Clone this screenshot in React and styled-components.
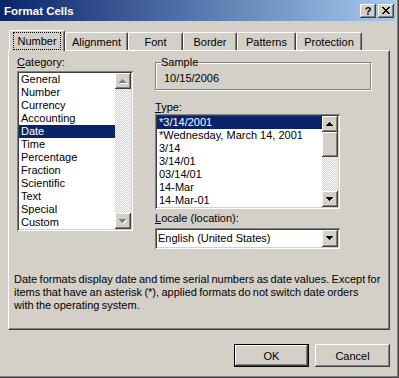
import React from 'react';
import styled, { createGlobalStyle, css } from 'styled-components';

const FACE = '#d4d0c8';
const SHADOW = '#808080';
const DARK = '#404040';
const SELECT = '#0a246a';

const GlobalStyle = createGlobalStyle`
  html, body {
    margin: 0;
    padding: 0;
    background: ${FACE};
  }
  body {
    font-family: "Liberation Sans", Arial, sans-serif;
    font-size: 11px;
    color: #000;
  }
`;

const raised = css`
  box-shadow: inset -1px -1px 0 ${DARK}, inset 1px 1px 0 #fff, inset -2px -2px 0 ${SHADOW}, inset 2px 2px 0 ${FACE};
`;

const sunken = css`
  box-shadow: inset 1px 1px 0 ${SHADOW}, inset -1px -1px 0 #fff, inset 2px 2px 0 ${DARK}, inset -2px -2px 0 ${FACE};
`;

const Window = styled.div`
  box-sizing: border-box;
  width: 399px;
  height: 378px;
  background: ${FACE};
  padding: 0 3px 3px 0;
  box-shadow: inset -1px -1px 0 ${DARK}, inset -2px -2px 0 ${SHADOW};
  display: flex;
  flex-direction: column;
`;

const TitleBar = styled.div`
  flex: none;
  height: 21px;
  display: flex;
  align-items: center;
  gap: 2px;
  padding: 0 2px 0 4px;
  background: linear-gradient(to right, #0a246a, #a6caf0);
`;

const Title = styled.div`
  flex: 1;
  color: #fff;
  font-weight: bold;
  font-size: 11.5px;
`;

const CaptionButton = styled.div`
  box-sizing: border-box;
  width: 16px;
  height: 14px;
  background: ${FACE};
  ${raised};
  display: flex;
  align-items: center;
  justify-content: center;
  font-weight: bold;
  font-size: 11px;
  line-height: 12px;
`;

const Body = styled.div`
  flex: 1;
  display: flex;
  flex-direction: column;
  padding: 9px 6px 0 8px;
`;

const TabStrip = styled.div`
  display: flex;
  align-items: flex-end;
  height: 21px;
  padding-left: 1px;
  margin-bottom: -1px;
  position: relative;
  z-index: 1;
`;

const Tab = styled.div`
  box-sizing: border-box;
  width: ${p => p.$w}px;
  height: ${p => (p.$active ? 21 : 18)}px;
  margin-bottom: ${p => (p.$active ? 0 : 1)}px;
  padding-top: ${p => (p.$active ? 2 : 3)}px;
  background: ${FACE};
  border-top: 1px solid #fff;
  border-left: 1px solid #fff;
  border-right: 1px solid ${DARK};
  box-shadow: inset -1px 0 0 ${SHADOW};
  border-radius: 2px 2px 0 0;
  display: flex;
  justify-content: center;
  align-items: flex-start;
  line-height: 13px;
`;

const TabLabel = styled.span`
  padding: ${p => (p.$focus ? '2px 3px 1px' : '0')};
  outline: ${p => (p.$focus ? `1px dotted #000` : 'none')};
`;

const Panel = styled.div`
  box-sizing: border-box;
  height: 280px;
  border-top: 1px solid #fff;
  border-left: 1px solid #fff;
  border-right: 1px solid ${DARK};
  border-bottom: 1px solid ${DARK};
  box-shadow: inset -1px -1px 0 ${SHADOW};
  padding: 5px 0 0 5px;
  display: flex;
  flex-direction: column;
`;

const Columns = styled.div`
  display: grid;
  grid-template-columns: 116px 216px;
  column-gap: 22px;
  align-items: start;
  padding-left: 3px;
`;

const Column = styled.div`
  display: flex;
  flex-direction: column;
`;

const Label = styled.div`
  line-height: 13px;
  margin-top: ${p => p.$mt || 0}px;
  margin-bottom: ${p => p.$mb || 0}px;
`;

const GroupBox = styled.div`
  position: relative;
  box-sizing: border-box;
  height: 28px;
  margin-top: 6px;
  border: 1px solid ${SHADOW};
  box-shadow: 1px 1px 0 #fff, inset 1px 1px 0 #fff;
  padding: 9px 0 0 8px;
  line-height: 13px;
`;

const GroupTitle = styled.span`
  position: absolute;
  top: -7px;
  left: 5px;
  padding: 0 1px 0 0;
  background: ${FACE};
  line-height: 13px;
`;

const ListBox = styled.div`
  box-sizing: border-box;
  width: ${p => p.$w}px;
  height: ${p => p.$h}px;
  background: #fff;
  padding: 2px;
  ${sunken};
  display: flex;
`;

const Items = styled.div`
  flex: 1;
  overflow: hidden;
`;

const Item = styled.div`
  height: 13px;
  line-height: 13px;
  padding-left: 2px;
  white-space: nowrap;
  background: ${p => (p.$selected ? SELECT : 'transparent')};
  color: ${p => (p.$selected ? '#fff' : '#000')};
`;

const ScrollBar = styled.div`
  width: 16px;
  display: flex;
  flex-direction: column;
  background-color: #fff;
  background-image: conic-gradient(${FACE} 25%, #fff 0 50%, ${FACE} 0 75%, #fff 0);
  background-size: 2px 2px;
`;

const ScrollButton = styled.div`
  box-sizing: border-box;
  flex: none;
  width: 16px;
  height: ${p => p.$h || 16}px;
  background: ${FACE};
  ${raised};
  display: flex;
  align-items: center;
  justify-content: center;
`;

const Track = styled.div`
  flex: 1;
`;

const Combo = styled.div`
  box-sizing: border-box;
  width: 185px;
  height: 21px;
  margin-top: 3px;
  background: #fff;
  padding: 2px;
  ${sunken};
  display: flex;
`;

const ComboText = styled.div`
  flex: 1;
  line-height: 17px;
  padding-left: 1px;
`;

const Description = styled.div`
  margin-top: 24px;
  line-height: 13px;
  word-spacing: -0.7px;
  white-space: nowrap;
`;

const ButtonRow = styled.div`
  display: flex;
  justify-content: flex-end;
  gap: 6px;
  margin-top: 14px;
`;

const Button = styled.div`
  box-sizing: border-box;
  width: 75px;
  height: 23px;
  background: ${FACE};
  display: flex;
  align-items: center;
  justify-content: center;
  ${p =>
    p.$default
      ? css`
          border: 1px solid #000;
          ${raised};
        `
      : raised};
`;

const Arrow = ({ dir = 'down', disabled }) => {
  const rows = [0, 1, 2, 3];
  const rect = (i, fill, dx = 0) => {
    const r = dir === 'up' ? i : 3 - i;
    return <rect key={`${fill}${i}`} x={3 - i + dx} y={r + dx} width={1 + i * 2} height="1" fill={fill} />;
  };
  return (
    <svg width="8" height="5" viewBox="0 0 8 5" shapeRendering="crispEdges">
      {disabled && rows.map(i => rect(i, '#fff', 1))}
      {rows.map(i => rect(i, disabled ? SHADOW : '#000'))}
    </svg>
  );
};

const CloseGlyph = () => (
  <svg width="8" height="7" viewBox="0 0 8 7" shapeRendering="crispEdges">
    {[0, 1, 2, 3, 4, 5, 6].map(i => (
      <React.Fragment key={i}>
        <rect x={i} y={i} width="2" height="1" fill="#000" />
        <rect x={6 - i} y={i} width="2" height="1" fill="#000" />
      </React.Fragment>
    ))}
  </svg>
);

const tabs = [
  { name: 'Number', w: 56 },
  { name: 'Alignment', w: 63 },
  { name: 'Font', w: 55 },
  { name: 'Border', w: 54 },
  { name: 'Patterns', w: 59 },
  { name: 'Protection', w: 66 },
];

const categories = ['General', 'Number', 'Currency', 'Accounting', 'Date', 'Time', 'Percentage', 'Fraction', 'Scientific', 'Text', 'Special', 'Custom'];

const types = ['*3/14/2001', '*Wednesday, March 14, 2001', '3/14', '3/14/01', '03/14/01', '14-Mar', '14-Mar-01'];

export default function App() {
  return (
    <>
      <GlobalStyle />
      <Window>
        <TitleBar>
          <Title>Format Cells</Title>
          <CaptionButton>?</CaptionButton>
          <CaptionButton>
            <CloseGlyph />
          </CaptionButton>
        </TitleBar>
        <Body>
          <TabStrip>
            {tabs.map((t, i) => (
              <Tab key={t.name} $w={t.w} $active={i === 0}>
                <TabLabel $focus={i === 0}>{t.name}</TabLabel>
              </Tab>
            ))}
          </TabStrip>
          <Panel>
            <Columns>
              <Column>
                <Label $mb={2}>
                  <u>C</u>ategory:
                </Label>
                <ListBox $w={116} $h={160}>
                  <Items>
                    {categories.map(c => (
                      <Item key={c} $selected={c === 'Date'}>
                        {c}
                      </Item>
                    ))}
                  </Items>
                  <ScrollBar>
                    <ScrollButton>
                      <Arrow dir="up" disabled />
                    </ScrollButton>
                    <Track />
                    <ScrollButton>
                      <Arrow dir="down" disabled />
                    </ScrollButton>
                  </ScrollBar>
                </ListBox>
              </Column>
              <Column>
                <GroupBox>
                  <GroupTitle>Sample</GroupTitle>
                  10/15/2006
                </GroupBox>
                <Label $mt={11}>
                  <u>T</u>ype:
                </Label>
                <ListBox $w={185} $h={95}>
                  <Items>
                    {types.map((t, i) => (
                      <Item key={t} $selected={i === 0}>
                        {t}
                      </Item>
                    ))}
                  </Items>
                  <ScrollBar>
                    <ScrollButton>
                      <Arrow dir="up" />
                    </ScrollButton>
                    <ScrollButton $h={25} />
                    <Track />
                    <ScrollButton>
                      <Arrow dir="down" />
                    </ScrollButton>
                  </ScrollBar>
                </ListBox>
                <Label $mt={3}>
                  <u>L</u>ocale (location):
                </Label>
                <Combo>
                  <ComboText>English (United States)</ComboText>
                  <ScrollButton $h={17}>
                    <Arrow dir="down" />
                  </ScrollButton>
                </Combo>
              </Column>
            </Columns>
            <Description>
              Date formats display date and time serial numbers as date values. Except for
              <br />
              items that have an asterisk (*), applied formats do not switch date orders
              <br />
              with the operating system.
            </Description>
          </Panel>
          <ButtonRow>
            <Button $default>OK</Button>
            <Button>Cancel</Button>
          </ButtonRow>
        </Body>
      </Window>
    </>
  );
}
